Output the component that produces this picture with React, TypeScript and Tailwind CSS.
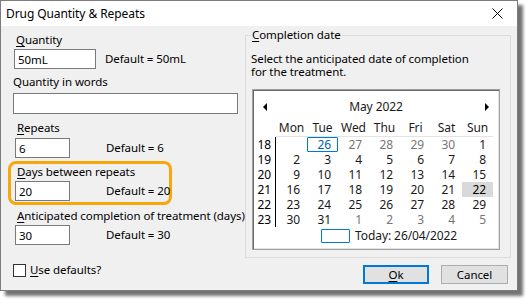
type Cell = { n: number; muted?: boolean; selected?: boolean; marked?: boolean } | null;

const dayNames = ['Mon', 'Tue', 'Wed', 'Thu', 'Fri', 'Sat', 'Sun'];

const weeks: { wk: number; days: Cell[] }[] = [
  {
    wk: 18,
    days: [
      null,
      { n: 26, selected: true },
      { n: 27, muted: true },
      { n: 28, muted: true },
      { n: 29, muted: true },
      { n: 30, muted: true },
      { n: 1 },
    ],
  },
  { wk: 19, days: [2, 3, 4, 5, 6, 7, 8].map((n) => ({ n })) },
  { wk: 20, days: [9, 10, 11, 12, 13, 14, 15].map((n) => ({ n })) },
  { wk: 21, days: [16, 17, 18, 19, 20, 21].map((n) => ({ n } as Cell)).concat([{ n: 22, marked: true }]) },
  { wk: 22, days: [23, 24, 25, 26, 27, 28, 29].map((n) => ({ n })) },
  {
    wk: 23,
    days: [{ n: 30 }, { n: 31 }, ...[1, 2, 3, 4, 5].map((n) => ({ n, muted: true }))],
  },
];

function TextBox({ value, className = '' }: { value: string; className?: string }) {
  return (
    <input
      readOnly
      defaultValue={value}
      className={`h-[20px] bg-white border border-[#7a7a7a] pl-[3px] text-[11.5px] text-black outline-none ${className}`}
    />
  );
}

function Label({ first, rest, className = '' }: { first: string; rest: string; className?: string }) {
  return (
    <div className={`h-[16px] leading-[16px] whitespace-nowrap ${className}`}>
      <u className="underline-offset-[2px]">{first}</u>
      {rest}
    </div>
  );
}

function Calendar() {
  return (
    <div className="ml-[6px] w-[248px] h-[161px] bg-white border border-[#a0a0a0] shadow-[inset_1px_1px_0_#696969,inset_-1px_-1px_0_#e3e3e3] flex flex-col p-[1px] text-[12px]">
      {/* Month header */}
      <div className="h-[30px] flex items-center justify-between px-[9px] pt-[1px]">
        <svg width="5" height="8" viewBox="0 0 5 8">
          <path d="M4 0 L0 4 L4 8 Z" fill="#000" />
        </svg>
        <span className="text-[#1a1a1a]">May 2022</span>
        <svg width="5" height="8" viewBox="0 0 5 8">
          <path d="M1 0 L5 4 L1 8 Z" fill="#000" />
        </svg>
      </div>

      {/* Day names */}
      <div className="ml-[22px] w-[217px] h-[16px] grid grid-cols-7 border-b border-[#e3e3e3] leading-[14px] text-[#1a1a1a]">
        {dayNames.map((d) => (
          <div key={d} className="text-center">
            {d}
          </div>
        ))}
      </div>

      {/* Weeks */}
      <div className="flex leading-[15px]">
        <div className="w-[22px] flex flex-col border-r border-black">
          {weeks.map((w) => (
            <div key={w.wk} className="h-[15px] text-right pr-[4px] text-black">
              {w.wk}
            </div>
          ))}
        </div>
        <div className="w-[217px] grid grid-cols-7">
          {weeks.map((w) =>
            w.days.map((d, i) => (
              <div
                key={`${w.wk}-${i}`}
                className={`h-[15px] text-right ${
                  d?.selected
                    ? 'border border-[#0078d7] rounded-[1px] text-[#0063b1] pr-[6px] leading-[13px]'
                    : d?.marked
                      ? 'bg-[#d9d9d9] text-black pr-[7px]'
                      : d?.muted
                        ? 'text-[#767676] pr-[7px]'
                        : 'text-[#1a1a1a] pr-[7px]'
                }`}
              >
                {d ? d.n : ''}
              </div>
            ))
          )}
        </div>
      </div>

      {/* Today */}
      <div className="mt-[2px] flex items-center pl-[67px] gap-[5px] text-[#1a1a1a]">
        <span className="w-[29px] h-[14px] border border-[#0078d7] rounded-[1px]" />
        <span className="leading-[14px] whitespace-nowrap">Today: 26/04/2022</span>
      </div>
    </div>
  );
}

export default function App() {
  return (
    <div className="min-h-screen bg-white font-['Segoe_UI','Noto_Sans',sans-serif] text-[11.5px] tracking-[-0.08px] text-black">
      <div className="w-[518px] h-[291px] border border-[#7c7c7c] bg-[#f0f0f0] flex flex-col shadow-[5px_5px_3px_rgba(0,0,0,0.55)]">
        {/* Title bar */}
        <div className="h-[25px] bg-white flex items-center justify-between pl-[5px] pr-[14px]">
          <span className="text-[12px] leading-[16px]">Drug Quantity &amp; Repeats</span>
          <svg width="11" height="11" viewBox="0 0 11 11">
            <path d="M0.5 0.5 L10.5 10.5 M10.5 0.5 L0.5 10.5" stroke="#000" strokeWidth="1" />
          </svg>
        </div>

        {/* Body */}
        <div className="flex-1 flex">
          {/* Left column */}
          <div className="w-[244px] flex flex-col">
            <Label first="Q" rest="uantity" className="mt-[6px] ml-[15px]" />
            <div className="mt-[1px] flex items-center">
              <TextBox value="50mL" className="ml-[13px] w-[82px]" />
              <span className="ml-[9px] whitespace-nowrap">Default = 50mL</span>
            </div>

            <div className="mt-[5px] ml-[12px] h-[16px] leading-[16px] whitespace-nowrap">Quantity in words</div>
            <TextBox value="" className="mt-[3px] ml-[12px] w-[225px] h-[21px]" />

            <Label first="R" rest="epeats" className="mt-[6px] ml-[16px]" />
            <div className="mt-[2px] flex items-center">
              <TextBox value="6" className="ml-[14px] w-[55px]" />
              <span className="ml-[36px] whitespace-nowrap">Default = 6</span>
            </div>

            {/* Highlighted field */}
            <div className="mt-[3px] ml-[7px] w-[164px] h-[44px] border-[3px] border-[#f7a70a] rounded-[8px] flex flex-col">
              <Label first="D" rest="ays between repeats" className="ml-[6px]" />
              <div className="mt-[1px] flex items-center">
                <TextBox value="20" className="ml-[4px] w-[55px]" />
                <span className="ml-[36px] whitespace-nowrap">Default = 20</span>
              </div>
            </div>

            <Label first="A" rest="nticipated completion of treatment (days)" className="mt-[3px] ml-[16px]" />
            <div className="mt-[1px] flex items-center">
              <TextBox value="30" className="ml-[14px] w-[55px]" />
              <span className="ml-[36px] whitespace-nowrap">Default = 30</span>
            </div>

            <div className="mt-[17px] ml-[12px] flex items-center gap-[4px]">
              <span className="w-[13px] h-[13px] bg-white border border-[#333333]" />
              <Label first="U" rest="se defaults?" />
            </div>
          </div>

          {/* Right column */}
          <div className="w-[266px] flex flex-col">
            <fieldset className="mt-[1px] border border-[#dcdcdc] pb-[7px]">
              <legend className="ml-[5px] px-[1px] h-[16px] leading-[16px] whitespace-nowrap">
                <u className="underline-offset-[2px]">C</u>ompletion date
              </legend>
              <div className="mt-[9px] ml-[5px] leading-[13px] whitespace-nowrap">
                Select the anticipated date of completion
                <br />
                for the treatment.
              </div>
              <div className="mt-[11px]">
                <Calendar />
              </div>
            </fieldset>

            <div className="mt-[7px] flex justify-end gap-[12px] pr-[3px]">
              <button className="w-[66px] h-[19px] bg-[#e1e1e1] border-2 border-[#0078d7] leading-[15px]">
                <u className="underline-offset-[2px]">O</u>k
              </button>
              <button className="w-[67px] h-[19px] bg-[#e1e1e1] border border-[#adadad] leading-[17px]">
                Cancel
              </button>
            </div>
          </div>
        </div>
      </div>
    </div>
  );
}
